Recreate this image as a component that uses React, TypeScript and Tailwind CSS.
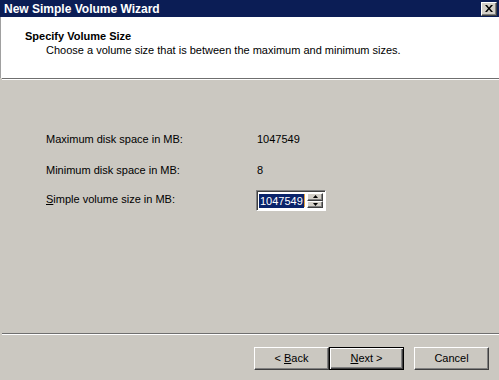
const bevel =
  'border border-t-white border-l-white border-r-[#404040] border-b-[#404040] shadow-[inset_-1px_-1px_0_#808080]'

const SpinButton = ({ up }: { up?: boolean }) => (
  <div className={`flex-1 flex items-center justify-center bg-[#d4d0c8] ${bevel}`}>
    <svg width="5" height="3" viewBox="0 0 5 3">
      {up ? <path d="M2.5 0 L5 3 L0 3 Z" fill="#000" /> : <path d="M0 0 L5 0 L2.5 3 Z" fill="#000" />}
    </svg>
  </div>
)

const WizardButton = ({ children, primary }: { children: React.ReactNode; primary?: boolean }) => (
  <button
    className={
      primary
        ? 'w-[75px] h-[23px] flex items-center justify-center bg-[#cbc8c1] border border-black shadow-[inset_1px_1px_0_#fff,inset_-1px_-1px_0_#404040,inset_-2px_-2px_0_#808080] text-[11px] text-black'
        : `w-[75px] h-[23px] flex items-center justify-center bg-[#cbc8c1] ${bevel} text-[11px] text-black`
    }
  >
    <span>{children}</span>
  </button>
)

export default function App() {
  return (
    <div
      className="w-[499px] h-[380px] bg-[#cbc8c1] flex flex-col overflow-hidden text-black"
      style={{ fontFamily: '"Liberation Sans", Arial, sans-serif' }}
    >
      {/* Title bar */}
      <div className="h-[17px] shrink-0 bg-[#0b1d55] flex items-center justify-between pl-[4px] pr-[2px]">
        <span className="text-white font-bold text-[12px] leading-none">New Simple Volume Wizard</span>
        <div className={`w-[16px] h-[14px] flex items-center justify-center bg-[#d4d0c8] ${bevel}`}>
          <svg width="8" height="7" viewBox="0 0 8 7">
            <path d="M0 0 L2 0 L4 2.5 L6 0 L8 0 L5 3.5 L8 7 L6 7 L4 4.5 L2 7 L0 7 L3 3.5 Z" fill="#000" />
          </svg>
        </div>
      </div>

      {/* Header */}
      <div className="h-[61px] shrink-0 bg-white border-l border-[#a0a0a0] pt-[12px] pl-[24px] text-[11px] leading-[14px]">
        <div className="font-bold">Specify Volume Size</div>
        <div className="pl-[21px]">Choose a volume size that is between the maximum and minimum sizes.</div>
      </div>
      <div className="ml-[2px] h-[2px] shrink-0 border-t border-[#6f6f6f] border-b border-b-white" />

      {/* Body */}
      <div className="flex-1 pl-[46px] pt-[52px] text-[11px] leading-[14px]">
        <div className="flex">
          <span className="w-[211px]">Maximum disk space in MB:</span>
          <span>1047549</span>
        </div>
        <div className="flex mt-[17px]">
          <span className="w-[211px]">Minimum disk space in MB:</span>
          <span>8</span>
        </div>
        <div className="flex items-start mt-[13px] h-[21px]">
          <span className="w-[210px] pt-[2px]">
            <u>S</u>imple volume size in MB:
          </span>
          <div className="w-[70px] h-[21px] flex bg-white border border-t-[#808080] border-l-[#808080] border-r-white border-b-white shadow-[inset_1px_1px_0_#404040] p-[2px]">
            <div className="flex-1 flex items-center">
              <span className="bg-[#0a246a] text-white px-[1px] leading-[14px] text-[11px]">1047549</span>
              <span className="w-[1px] h-[13px] bg-[#e0a040]" />
            </div>
            <div className="w-[16px] flex flex-col">
              <SpinButton up />
              <SpinButton />
            </div>
          </div>
        </div>
      </div>

      {/* Footer */}
      <div className="ml-[2px] h-[2px] shrink-0 border-t border-[#6f6f6f] border-b border-b-white" />
      <div className="h-[45px] shrink-0 flex items-start justify-end pt-[12px] pr-[10px]">
        <WizardButton>
          &lt; <u>B</u>ack
        </WizardButton>
        <WizardButton primary>
          <u>N</u>ext &gt;
        </WizardButton>
        <div className="w-[10px]" />
        <WizardButton>Cancel</WizardButton>
      </div>
    </div>
  )
}
